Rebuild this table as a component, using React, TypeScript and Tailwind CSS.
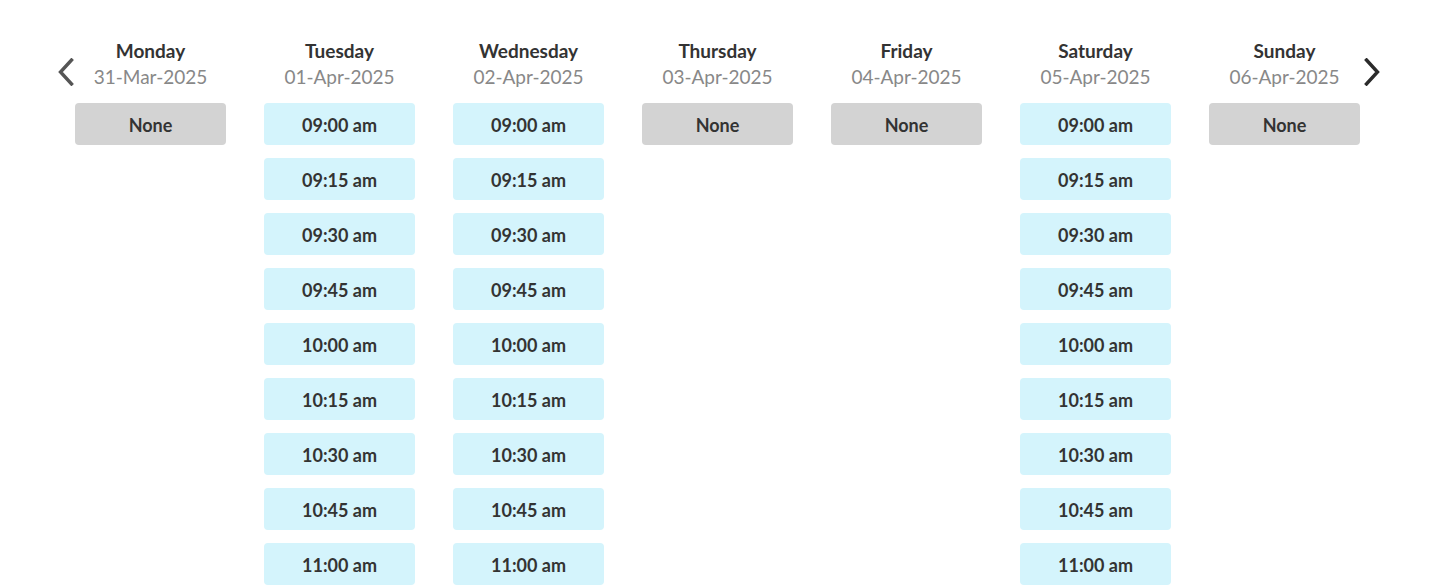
const days = [
	{ name: 'Monday', date: '31-Mar-2025', open: false },
	{ name: 'Tuesday', date: '01-Apr-2025', open: true },
	{ name: 'Wednesday', date: '02-Apr-2025', open: true },
	{ name: 'Thursday', date: '03-Apr-2025', open: false },
	{ name: 'Friday', date: '04-Apr-2025', open: false },
	{ name: 'Saturday', date: '05-Apr-2025', open: true },
	{ name: 'Sunday', date: '06-Apr-2025', open: false },
];

const slots = [
	'09:00 am',
	'09:15 am',
	'09:30 am',
	'09:45 am',
	'10:00 am',
	'10:15 am',
	'10:30 am',
	'10:45 am',
	'11:00 am',
];

const Chevron = ({ dir, className }: { dir: 'left' | 'right'; className: string }) => (
	<svg viewBox="0 0 18 28" className={className} fill="none">
		<path
			d={dir === 'left' ? 'M15 2 L4 14 L15 26' : 'M3 2 L14 14 L3 26'}
			stroke="currentColor"
			strokeWidth="3.4"
			strokeLinecap="square"
		/>
	</svg>
);

const App = () => {
	return (
		<div className="h-[586px] overflow-hidden bg-white font-['Lato','Open_Sans',sans-serif]">
			<div className="flex items-start pl-[56px] pt-[38px]">
				<button className="mt-[20px] w-[19px] h-[28px] text-[#555]">
					<Chevron dir="left" className="w-[19px] h-[28px]" />
				</button>
				<div className="flex gap-[38px]">
					{days.map((day) => (
						<div key={day.name} className="w-[151px] flex flex-col">
							<div className="text-center text-[19px] leading-[26px] font-bold text-[#333]">
								{day.name}
							</div>
							<div className="text-center text-[19px] leading-[26px] text-[#888]">
								{day.date}
							</div>
							<div className="mt-[13px] flex flex-col gap-[13px]">
								{day.open ? (
									slots.map((slot) => (
										<div
											key={slot}
											className="h-[42px] pt-[2px] rounded-[4px] bg-[#d4f4fc] flex items-center justify-center text-[18px] font-bold text-[#333]"
										>
											{slot}
										</div>
									))
								) : (
									<div className="h-[42px] pt-[2px] rounded-[4px] bg-[#d3d3d3] flex items-center justify-center text-[18px] font-bold text-[#333]">
										None
									</div>
								)}
							</div>
						</div>
					))}
				</div>
				<button className="ml-[3px] mt-[20px] w-[19px] h-[28px] text-[#2b2b2b]">
					<Chevron dir="right" className="w-[19px] h-[28px]" />
				</button>
			</div>
		</div>
	);
};

export default App;
